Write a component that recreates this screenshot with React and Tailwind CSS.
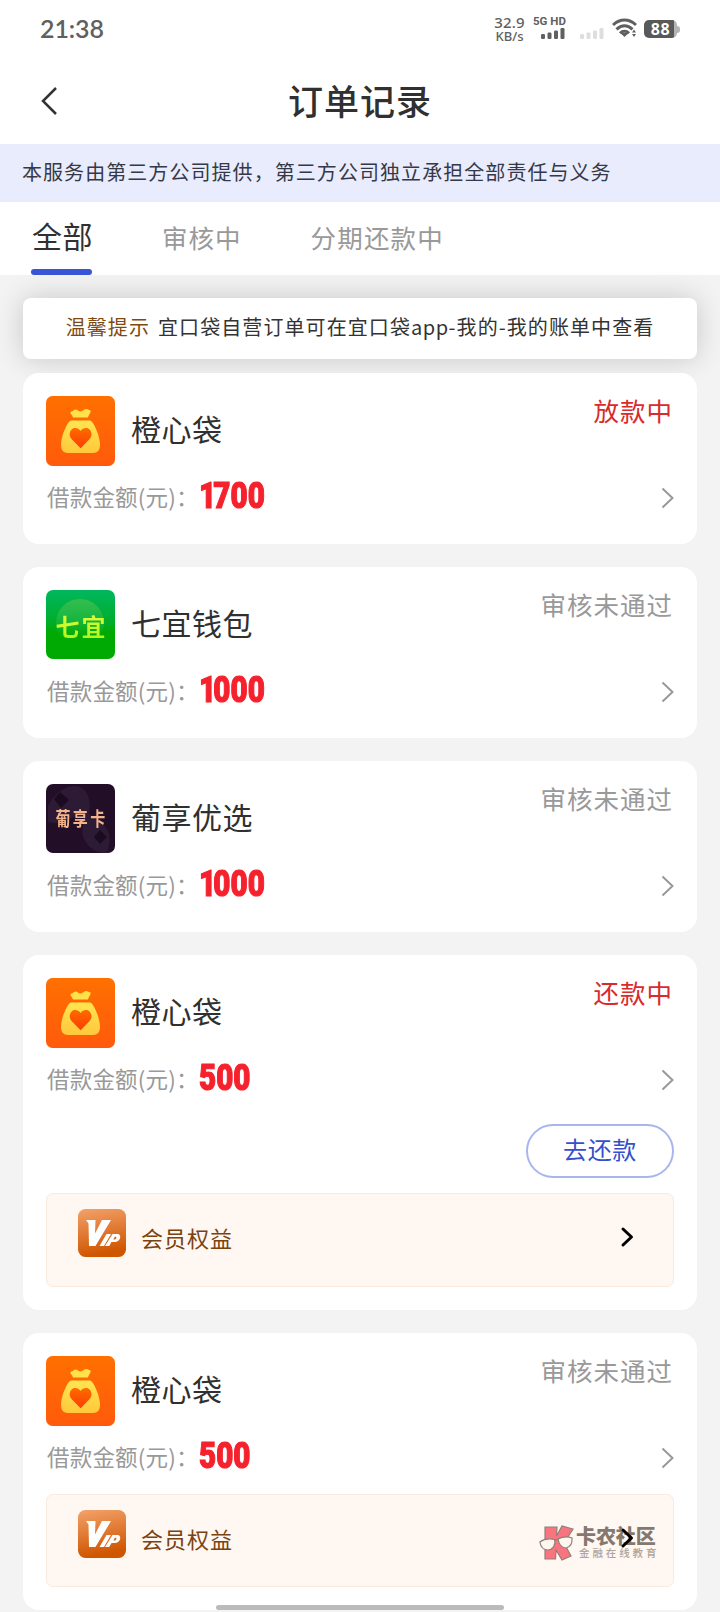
import React from 'react';

const orders = [
  { logo: 'bag', name: '橙心袋', amount: '1700', status: '放款中', active: true },
  { logo: 'qiyi', name: '七宜钱包', amount: '1000', status: '审核未通过' },
  { logo: 'puxiang', name: '葡享优选', amount: '1000', status: '审核未通过' },
  { logo: 'bag', name: '橙心袋', amount: '500', status: '还款中', active: true, repay: true, vip: true },
  { logo: 'bag', name: '橙心袋', amount: '500', status: '审核未通过', vip: true, last: true },
];

const StatusBar = () => (
  <div className="h-[57px] flex items-start justify-between pl-10 pr-10 text-[#606060]">
    <div className="pt-[12px] font-['Lato'] font-semibold text-[25px] leading-[32px] -tracking-[0.1px]">21:38</div>
    <div className="flex pt-[16px] font-['Noto_Sans']">
      <div className="w-[31px] text-center font-medium">
        <p className="text-[15px] leading-[13px] tracking-[0.2px]">32.9</p>
        <p className="text-[13px] leading-[14px]">KB/s</p>
      </div>
      <div className="ml-2 w-[33px]">
        <p className="font-['Roboto'] font-bold text-[11.5px] leading-[10px] whitespace-nowrap">5G HD</p>
        <svg className="ml-[8px] mt-[2px] w-6 h-[11px]" viewBox="0 0 24 11" fill="currentColor">
          <rect x="0" y="6" width="4" height="5" rx="1.2" /><rect x="6.5" y="4.5" width="4" height="6.5" rx="1.2" />
          <rect x="13" y="2.5" width="4" height="8.5" rx="1.2" /><rect x="19.5" y="0" width="4" height="11" rx="1.2" />
        </svg>
      </div>
      <svg className="ml-[14px] mt-[12px] w-6 h-[11px]" viewBox="0 0 24 11" fill="#dedede">
        <rect x="0" y="6" width="4" height="5" rx="1.2" /><rect x="6.5" y="4.5" width="4" height="6.5" rx="1.2" />
        <rect x="13" y="2.5" width="4" height="8.5" rx="1.2" /><rect x="19.5" y="0" width="4" height="11" rx="1.2" />
      </svg>
      <svg className="ml-2 mt-[2px] w-[26px] h-5" viewBox="0 0 26 20" fill="none" stroke="currentColor" strokeWidth="3">
        <path d="M1 7C8 .4 17 .4 24 7" />
        <path d="M4.500 11.400c5-4.800 11-4.800 16 0" />
        <path d="M8 15.200c2.700-2.700 6.300-2.700 9 0" />
        <path d="M8.800 15.500l3.700 3.500 3.700-3.500c-2-1.500-5.400-1.500-7.400 0z" fill="currentColor" stroke="none" />
        <path d="M20 14.600l2-3 2 3zM20 16l2 3 2-3z" fill="currentColor" stroke="none" />
      </svg>
      <div className="ml-[6px] mt-[4px] h-[18px] flex items-center">
        <div className="w-[33px] h-[18px] rounded-[5px] bg-[linear-gradient(90deg,#595959_0_30px,#b4b4b4_30px)] text-white font-bold text-[16px] leading-[18px] text-center tracking-[0.5px]">88</div>
        <div className="w-[3px] h-[7px] rounded-r-full bg-[#b4b4b4]" />
      </div>
    </div>
  </div>
);

const BagLogo = () => (
  <svg className="w-[69px] h-[70px]" viewBox="0 0 69 70">
    <defs>
      <linearGradient id="bagBg" x1="0" y1="0" x2="0" y2="1"><stop stopColor="#ff7000" /><stop offset="1" stopColor="#ff5a0c" /></linearGradient>
      <linearGradient id="bagFill" x1="0" y1="0" x2="0" y2="1"><stop stopColor="#ffe650" /><stop offset="1" stopColor="#ffc83c" /></linearGradient>
      <linearGradient id="bagHeart" x1="0" y1="0" x2="0" y2="1"><stop stopColor="#ff6a00" /><stop offset="1" stopColor="#ff3d00" /></linearGradient>
    </defs>
    <rect width="69" height="70" rx="6.500" fill="url(#bagBg)" />
    <path d="M24.500 16c2 0 3-2.500 5-2.500 2.200 0 2.800 2 5 2 2.500 0 3-2.500 5.500-2.500 2 0 2.500 1.500 4.500 1.200.6 2.800-1.800 4.300-2.500 7.300H27c-.5-2.500-2.800-3.200-2.500-5.500z" fill="#ffe24a" />
    <path d="M25 24.500h19c3 0 10 15 10 24.500 0 5-2.500 8-7 8H22c-4.500 0-7-3-7-8 0-9.500 7-24.500 10-24.500z" fill="url(#bagFill)" />
    <path d="M34.600 52.200L26 43.500c-3-3-3-7.500-.3-10 2.500-2.300 6.700-1.800 8.900 1.600 2.200-3.400 6.400-3.900 8.900-1.600 2.700 2.500 2.700 7-.3 10z" fill="url(#bagHeart)" />
  </svg>
);

const QiyiLogo = () => (
  <div className="w-[69px] h-[69px] rounded-[7px] bg-gradient-to-b from-[#00b75c] to-[#00aa02] to-60% relative overflow-hidden flex items-center justify-center">
    <div className="absolute left-[10px] top-[9px] w-12 h-12 rounded-full bg-gradient-to-b from-[#35bd4c] to-[#00aa0200] to-80%" />
    <span className="relative top-px left-px font-['Noto_Sans_CJK_SC',sans-serif] font-bold text-[24px] leading-[34px] tracking-[2px] whitespace-nowrap bg-gradient-to-b from-[#eaff3c] to-[#a5f516] bg-clip-text text-transparent">七宜</span>
  </div>
);

const PuxiangLogo = () => (
  <div className="w-[69px] h-[69px] rounded-[7px] bg-[#220f27] relative overflow-hidden flex items-center justify-center">
    <svg className="absolute inset-0 w-full h-full" viewBox="0 0 69 69" fill="#2d1a34">
      <path d="M2 22C8 8 24-1 34 3c10 5 11 18 9 27 7 4 12 8 17 14 4 5 5 14 1 25-10 1-21-6-24-17-2-7 2-13 0-19-12-4-20 10-35 5z" />
      <path d="M8 15l6-7 9 8-8 8zM48 53l6-7 7 7-7 7z" fill="#1a0b20" />
    </svg>
    <span className="relative left-px -top-px font-['Noto_Sans_CJK_SC',sans-serif] font-bold text-[15px] leading-5 tracking-[2.300px] whitespace-nowrap text-[#f3b48c] scale-y-[1.250]">葡享卡</span>
  </div>
);

const logos = { bag: BagLogo, qiyi: QiyiLogo, puxiang: PuxiangLogo };

// The leading 1 is narrower than the other digits
const Amount = ({ value }) => (
  <p className="origin-left scale-x-[0.8] font-['Roboto'] font-black text-[37px] leading-[40px] mt-[-4px] text-[#f5222d] [-webkit-text-stroke:1.2px_#f5222d]">
    {value.startsWith('1') ? <><span className="-tracking-[3.500px]">1</span>{value.slice(1)}</> : value}
  </p>
);

const Watermark = () => (
  <div className="absolute left-[492px] top-[30px] flex">
    <svg className="w-9 h-9" viewBox="0 0 36 36" stroke="#8f807a" strokeWidth="1.200">
      <path d="M6 2h12l-.5 9L23 1l11 3-9 14 7 13-9 4-6-10-.5 9H6z" fill="#fa7480" />
      <path d="M.800 17c4-3 9-4 15-2.500 1 6-2 10-7 10.500-5 0-7-3-8-8zM19 14c4-2 9-3 14-1 .5 6-2 9-6 10-5 0-7-4-8-9z" fill="#fff6ee" />
      <path d="M15.500 15.500l4-1.500" fill="none" />
    </svg>
    <div className="pl-[1px] whitespace-nowrap">
      <p className="font-black text-[20px] leading-[22px] tracking-[-0.1px] text-[#85796f]">卡农社区</p>
      <p className="pl-[3px] font-medium text-[10.500px] leading-[11px] tracking-[2.900px] text-[#b0a49b]">金融在线教育</p>
    </div>
  </div>
);

const VipBar = ({ watermark }) => (
  <div className={`relative ${watermark ? 'h-[93px]' : 'h-[94px]'} rounded-[7px] border border-[#faeadd] bg-[#fff7f1] flex items-start pl-[31px] pt-[15px]`}>
    <svg className="w-12 h-12 shrink-0" viewBox="0 0 48 48">
      <defs><linearGradient id="vipBg" x1="0" y1="0" x2="0.200" y2="1"><stop stopColor="#f3a26b" /><stop offset="1" stopColor="#cf5500" /></linearGradient></defs>
      <rect width="48" height="48" rx="7.500" fill="url(#vipBg)" />
      <path d="M8 11h9.500l-.5 13.500L24 11h9L17.500 37H11l-.5-22.500z" fill="#fff" />
      <path d="M28.500 25h4.500l-7 12h-4.500zM34.500 25h5c4.500 0 3.500 8-3 8h-3l-2.300 4H27zM37 27.500l-1.700 3h1.500c1.800 0 2.500-3 .2-3z" fill="#fff" fillRule="evenodd" />
    </svg>
    <span className="ml-[15px] mt-[12px] text-[22px] leading-[32px] tracking-[1px] text-[#7a4210]">会员权益</span>
    {watermark && <Watermark />}
    <svg className="absolute right-[39px] top-[32px] w-[14px] h-[22px]" viewBox="0 0 14 22" fill="none" stroke="#000" strokeWidth="3" strokeLinecap="round" strokeLinejoin="round"><path d="M3 3l8.500 8L3 19" /></svg>
  </div>
);

const OrderCard = ({ order }) => {
  const Logo = logos[order.logo];
  return (
    <div className="rounded-[16px] bg-white p-[23px]">
      <div className="flex h-[70px]">
        <Logo />
        <p className="ml-[16px] mt-[10px] text-[30px] leading-[44px] tracking-[0.500px] text-[#303030]">{order.name}</p>
        <p className={`ml-auto mr-px -mt-[5px] text-[25.500px] leading-[38px] tracking-[1px] ${order.active ? 'text-[#d82c2c]' : 'text-[#999]'}`}>{order.status}</p>
      </div>
      <div className="flex items-center h-[47px] mt-[8px]">
        <p className="pl-px text-[22.500px] leading-[32px] tracking-[0.200px] text-[#999] w-[153px] -mt-[3px] whitespace-nowrap">借款金额(元)：</p>
        <Amount value={order.amount} />
        <svg className="ml-auto w-[13px] h-[22px]" viewBox="0 0 13 22" fill="none" stroke="#999" strokeWidth="2"><path d="M1.500 1.500l10 9.500-10 9.500" /></svg>
      </div>
      {order.repay && (
        <div className="flex justify-end mt-[21px] mb-[15px]">
          <button className="w-[148px] h-[54px] rounded-[27px] border-2 border-[#a9b5ef] text-[24px] leading-[36px] tracking-[0.7px] text-[#3450cc] pb-[5px]">去还款</button>
        </div>
      )}
      {order.vip && <div className={order.repay ? '' : 'mt-[13px]'}><VipBar watermark={order.last} /></div>}
    </div>
  );
};

const App = () => (
  <div className="relative w-[720px] h-[1612px] overflow-hidden bg-[#f3f3f3] font-['Noto_Sans_CJK_SC',sans-serif]">
    <header className="h-[144px] bg-white">
      <StatusBar />
      <div className="h-[85px] grid grid-cols-[80px_1fr_80px] items-center">
        <svg className="ml-[40px] mt-[2px] w-[20px] h-[30px]" viewBox="0 0 20 30" fill="none" stroke="#333" strokeWidth="2.500"><path d="M16 2L3 15l13 13" /></svg>
        <h1 className="text-center text-[35px] leading-[50px] tracking-[1px] font-medium text-[#303030]">订单记录</h1>
      </div>
    </header>
    <div className="h-[58px] bg-[#e9ecfc] pl-[22px] pt-[12px] text-[20px] leading-[32px] tracking-[1.060px] text-[#353847] whitespace-nowrap">本服务由第三方公司提供，第三方公司独立承担全部责任与义务</div>
    <nav className="h-[73px] bg-white flex pl-[31px]">
      <div className="w-[61px] flex flex-col justify-between">
        <span className="pt-[11px] pl-px text-[30px] leading-[44px] tracking-[0.500px] text-[#303030] whitespace-nowrap">全部</span>
        <div className="h-[6px] rounded-full bg-[#3955d5]" />
      </div>
      <span className="ml-[70px] pt-[17px] text-[25.500px] leading-[36px] tracking-[1px] text-[#999]">审核中</span>
      <span className="ml-[69px] pt-[17px] text-[25.500px] leading-[36px] tracking-[1.200px] text-[#999]">分期还款中</span>
    </nav>
    <main className="px-[23px] pt-[23px]">
      <div className="h-[61px] rounded-[8px] bg-white shadow-[0_0_28px_rgba(0,0,0,0.180)] flex justify-center pt-[13px] text-[20px] leading-[32px] tracking-[1.080px] text-[#333] whitespace-nowrap">
        <span className="text-[#7f4a12] mr-2">温馨提示</span>
        <span>宜口袋自营订单可在宜口袋<span className="tracking-[0.500px]">app</span>-我的-我的账单中查看</span>
      </div>
      <div className="relative mt-[14px] flex flex-col gap-[23px]">
        {orders.map((order, i) => <OrderCard key={i} order={order} />)}
      </div>
    </main>
    <div className="absolute left-[216px] top-[1605px] w-[288px] h-[5px] rounded-full bg-[#bbb]" />
  </div>
);

export default App;
